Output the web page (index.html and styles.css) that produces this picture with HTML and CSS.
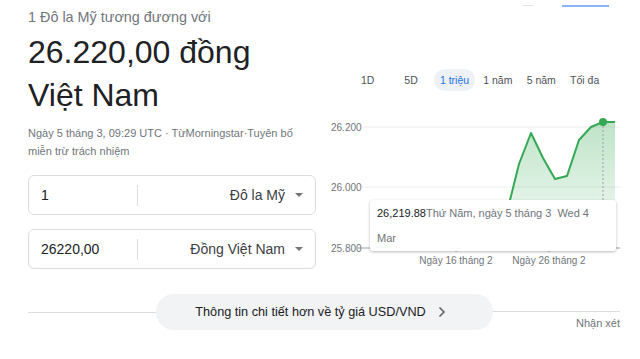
FILE: index.html
```html
<!DOCTYPE html>
<html lang="vi">
<head>
<meta charset="UTF-8">
<meta name="viewport" content="width=device-width, initial-scale=1.0">
<title>USD sang VND</title>
<link rel="stylesheet" href="styles.css">
</head>
<body>

<div class="main">
    <div class="summary">
        <div class="subtitle">1 Đô la Mỹ tương đương với</div>
        <div class="rate">26.220,00 đồng Việt Nam</div>
        <div class="meta">Ngày 5 tháng 3, 09:29 UTC · TừMorningstar·Tuyên bố miễn trừ trách nhiệm</div>

        <div class="converter">
            <div class="amount">1</div>
            <div class="divider"></div>
            <div class="currency">Đô la Mỹ <span class="caret"></span></div>
        </div>
        <div class="converter">
            <div class="amount">26220,00</div>
            <div class="divider"></div>
            <div class="currency">Đồng Việt Nam <span class="caret"></span></div>
        </div>
    </div>

    <div class="chart-col">
        <div class="strip">
            <span class="strip-grey"></span>
            <span class="strip-blue"></span>
        </div>

        <div class="ranges">
            <span class="range">1D</span>
            <span class="range">5D</span>
            <span class="range active">1 triệu</span>
            <span class="range">1 năm</span>
            <span class="range">5 năm</span>
            <span class="range">Tối đa</span>
        </div>

        <div class="chart">
            <svg width="300" height="160" viewBox="0 0 300 160">
                <defs>
                    <linearGradient id="fill" x1="0" y1="0" x2="0" y2="1">
                        <stop offset="0" stop-color="#34a853" stop-opacity="0.32"/>
                        <stop offset="1" stop-color="#34a853" stop-opacity="0.03"/>
                    </linearGradient>
                </defs>
                <line x1="42" y1="17" x2="300" y2="17" class="grid"/>
                <line x1="42" y1="77" x2="300" y2="77" class="grid"/>
                <line x1="38" y1="138" x2="300" y2="138" class="axis"/>
                <line x1="136" y1="138" x2="136" y2="142" class="axis"/>
                <line x1="229" y1="138" x2="229" y2="142" class="axis"/>

                <text x="11" y="21" class="ylabel">26.200</text>
                <text x="11" y="81" class="ylabel">26.000</text>
                <text x="11" y="142" class="ylabel">25.800</text>
                <text x="136" y="154" class="xlabel">Ngày 16 tháng 2</text>
                <text x="229" y="154" class="xlabel">Ngày 26 tháng 2</text>

                <polygon fill="url(#fill)" points="60,138 60,128 80,122 100,130 120,124 140,132 160,126 178,120 186,106 199,54 211,23 223,48 235,69 247,66 259,30 271,17 283,12 295,12 295,138"/>
                <polyline class="line" points="60,128 80,122 100,130 120,124 140,132 160,126 178,120 186,106 199,54 211,23 223,48 235,69 247,66 259,30 271,17 283,12 295,12"/>
                <line x1="283" y1="12" x2="283" y2="138" class="cursor"/>
                <circle cx="283" cy="12" r="4" fill="#34a853"/>
            </svg>

            <div class="tooltip">
                <span class="tip-value">26,219.88</span>Thứ Năm, ngày 5 tháng 3 <span class="tip-gap">Wed 4 Mar</span>
            </div>
        </div>
    </div>

    <div class="side-card"></div>
</div>

<div class="more">
    <div class="rule"></div>
    <div class="more-btn">
        Thông tin chi tiết hơn về tỷ giá USD/VND
        <svg width="8" height="12" viewBox="0 0 8 12"><path d="M1.5 1.5 6 6l-4.5 4.5" fill="none" stroke="#5f6368" stroke-width="1.6"/></svg>
    </div>
    <div class="feedback">
        <div class="rule-top"></div>
        <span>Nhận xét</span>
    </div>
</div>

</body>
</html>
```

FILE: styles.css
```css
body {
    margin: 0;
    width: 640px;
    height: 359px;
    overflow: hidden;
    font-family: "Liberation Sans", Arial, sans-serif;
    color: #202124;
    background-color: #fff;
}

.main {
    display: grid;
    grid-template-columns: 288px 300px 20px;
    column-gap: 4px;
    padding-left: 28px;
}

/* left column */
.summary {
    padding-top: 7px;
}

.subtitle {
    font-size: 14.4px;
    line-height: 20px;
    color: #70757a;
}

.rate {
    width: 270px;
    margin-top: 4px;
    font-size: 32px;
    line-height: 43px;
    color: #202124;
}

.meta {
    margin-top: 7px;
    font-size: 11px;
    line-height: 18px;
    color: #70757a;
    padding-right: 6px;
}

.converter {
    display: flex;
    align-items: center;
    height: 40px;
    margin-top: 15px;
    border: 1px solid #dadce0;
    border-radius: 6px;
    box-sizing: border-box;
    font-size: 14px;
}

.converter + .converter {
    margin-top: 14px;
}

.amount {
    width: 96px;
    padding-left: 12px;
    color: #202124;
}

.divider {
    width: 1px;
    height: 21px;
    background-color: #dadce0;
}

.currency {
    flex: 1;
    display: flex;
    align-items: center;
    justify-content: flex-end;
    gap: 10px;
    padding-right: 12px;
    color: #3c4043;
}

.caret {
    width: 0;
    height: 0;
    border-left: 4px solid transparent;
    border-right: 4px solid transparent;
    border-top: 4px solid #757575;
}

/* chart column */
.chart-col {
    display: flex;
    flex-direction: column;
}

.strip {
    display: flex;
    height: 10px;
    align-items: flex-end;
}

.strip-grey {
    width: 10px;
    height: 1px;
    margin-left: 203px;
    background-color: #e0e0e0;
    margin-bottom: 4px;
}

.strip-blue {
    width: 47px;
    height: 2px;
    margin-left: 29px;
    background-color: #8ab4f8;
    margin-bottom: 3px;
}

.ranges {
    display: grid;
    grid-template-columns: repeat(6, 43.4px);
    margin: 59px 0 0 26px;
    height: 22px;
}

.range {
    justify-self: center;
    align-self: center;
    font-size: 10.5px;
    line-height: 22px;
    padding: 0 6px;
    color: #4d5156;
}

.range.active {
    color: #1a73e8;
    background-color: #eef1f6;
    border-radius: 11px;
}

.chart {
    position: relative;
    margin-top: 19px;
    height: 160px;
}

.chart svg {
    display: block;
}

.grid {
    stroke: #ececec;
    stroke-width: 1;
}

.axis {
    stroke: #9aa0a6;
    stroke-width: 1;
}

.ylabel {
    font-family: "Liberation Sans", Arial, sans-serif;
    font-size: 10px;
    fill: #70757a;
}

.xlabel {
    font-family: "Liberation Sans", Arial, sans-serif;
    font-size: 10px;
    fill: #70757a;
    text-anchor: middle;
}

.line {
    fill: none;
    stroke: #34a853;
    stroke-width: 2;
    stroke-linejoin: round;
}

.cursor {
    stroke: #9aa0a6;
    stroke-width: 1;
    stroke-dasharray: 2 2;
}

.tooltip {
    position: absolute;
    left: 50px;
    top: 90px;
    width: 246px;
    height: 51px;
    box-sizing: border-box;
    padding: 1px 7px 0;
    background-color: #fff;
    border-radius: 3px;
    box-shadow: 0 1px 3px rgba(0, 0, 0, 0.28);
    font-size: 11px;
    line-height: 25px;
    color: #70757a;
}

.tip-value {
    color: #202124;
}

.tip-gap {
    margin-left: 3px;
}

/* right edge card */
.side-card {
    margin-left: 18px;
    height: 157px;
    border-left: 1px solid #e3e3e3;
    border-bottom: 1px solid #e3e3e3;
    border-bottom-left-radius: 8px;
}

/* bottom row */
.more {
    display: flex;
    align-items: center;
    margin: 24px 20px 0 28px;
    height: 36px;
}

.rule {
    flex: 1;
    height: 1px;
    background-color: #dadce0;
}

.more-btn {
    display: flex;
    align-items: center;
    justify-content: center;
    gap: 12px;
    width: 337px;
    height: 36px;
    padding-right: 7px;
    box-sizing: border-box;
    border-radius: 18px;
    background-color: #f1f3f4;
    font-size: 12.7px;
    color: #202124;
}

.feedback {
    flex: 1;
    align-self: flex-start;
    display: flex;
    flex-direction: column;
    align-items: flex-end;
    font-size: 11px;
    line-height: 16px;
    color: #70757a;
}

.rule-top {
    align-self: stretch;
    height: 17px;
    border-bottom: 1px solid #dadce0;
    margin-bottom: 3px;
}
```
